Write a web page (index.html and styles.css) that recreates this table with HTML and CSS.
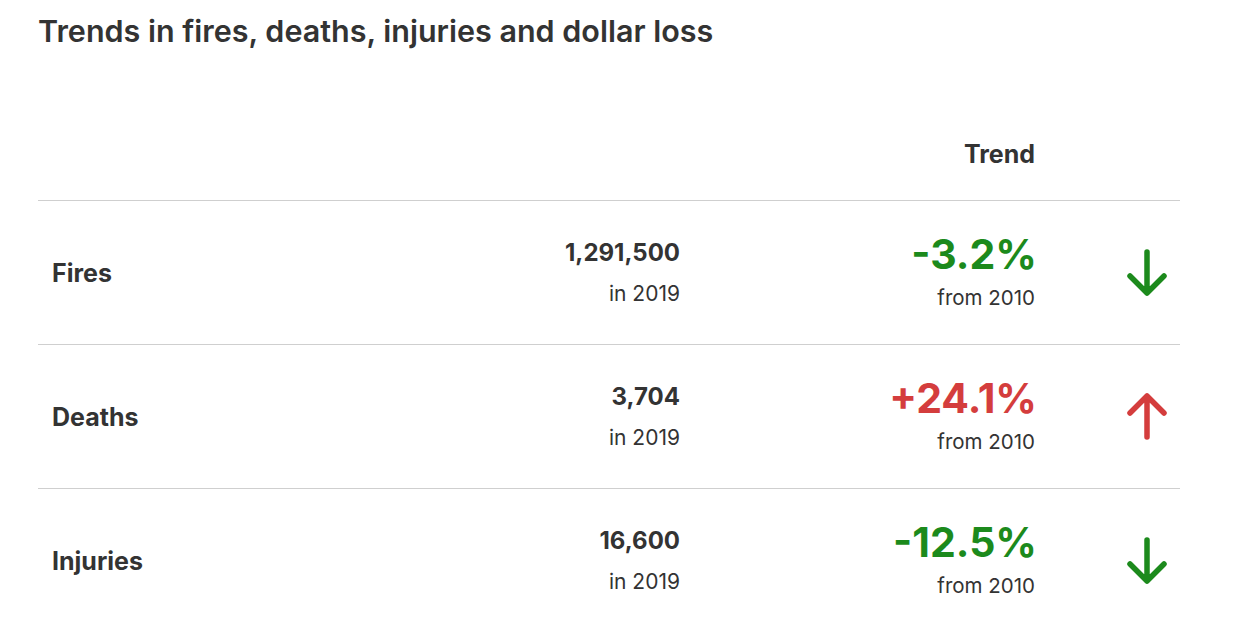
FILE: index.html
```html
<!DOCTYPE html>
<html>
<head>
<meta charset="utf-8">
<link rel="stylesheet" href="styles.css">
</head>
<body>
<div class="page">
  <h1 class="title">Trends in fires, deaths, injuries and dollar loss</h1>
  <div class="table">
    <div class="row head">
      <div class="c-label"></div>
      <div class="c-value"></div>
      <div class="c-trend"><span class="head-text">Trend</span></div>
      <div class="c-arrow"></div>
    </div>
    <div class="row">
      <div class="c-label">Fires</div>
      <div class="c-value"><span class="num">1,291,500</span><span class="sub">in 2019</span></div>
      <div class="c-trend"><span class="pct down">-3.2%</span><span class="sub2">from 2010</span></div>
      <div class="c-arrow"><svg class="arrow down" viewBox="0 0 46 50" width="46" height="50"><path d="M23 4 V45 M6 28 L23 45 L40 28" fill="none" stroke="currentColor" stroke-width="5.5" stroke-linecap="round" stroke-linejoin="round"/></svg></div>
    </div>
    <div class="row">
      <div class="c-label">Deaths</div>
      <div class="c-value"><span class="num">3,704</span><span class="sub">in 2019</span></div>
      <div class="c-trend"><span class="pct up">+24.1%</span><span class="sub2">from 2010</span></div>
      <div class="c-arrow"><svg class="arrow up" viewBox="0 0 46 50" width="46" height="50"><path d="M23 45 V4 M6 21 L23 4 L40 21" fill="none" stroke="currentColor" stroke-width="5.5" stroke-linecap="round" stroke-linejoin="round"/></svg></div>
    </div>
    <div class="row last">
      <div class="c-label">Injuries</div>
      <div class="c-value"><span class="num">16,600</span><span class="sub">in 2019</span></div>
      <div class="c-trend"><span class="pct down">-12.5%</span><span class="sub2">from 2010</span></div>
      <div class="c-arrow"><svg class="arrow down" viewBox="0 0 46 50" width="46" height="50"><path d="M23 4 V45 M6 28 L23 45 L40 28" fill="none" stroke="currentColor" stroke-width="5.5" stroke-linecap="round" stroke-linejoin="round"/></svg></div>
    </div>
  </div>
</div>
</body>
</html>
```

FILE: styles.css
```css
html, body {
  margin: 0;
  padding: 0;
  background: #ffffff;
}
body {
  font-family: Inter, "Noto Sans", "Liberation Sans", sans-serif;
  color: #333333;
}
.page {
  padding-left: 38px;
  width: 1142px;
}
.title {
  margin: 13px 0 0 0;
  font-size: 30.5px;
  line-height: 36px;
  font-weight: 600;
  letter-spacing: 0;
  color: #333333;
}
.table {
  margin-top: 90px;
}
.row {
  display: grid;
  grid-template-columns: 1fr 200px 355px 145px;
  height: 143px;
  border-bottom: 1px solid #cfcfcf;
  align-items: center;
}
.row.head {
  height: 61px;
  align-items: start;
}
.row.last {
  border-bottom: none;
}
.c-label {
  padding-left: 14px;
  font-size: 25px;
  line-height: 30px;
  font-weight: 700;
}
.c-value,
.c-trend {
  display: flex;
  flex-direction: column;
  align-items: flex-end;
}
.head-text {
  font-size: 25px;
  line-height: 30px;
  font-weight: 700;
}
.num {
  font-size: 24px;
  line-height: 41px;
  font-weight: 700;
}
.sub {
  font-size: 21px;
  line-height: 41px;
  font-weight: 400;
}
.pct {
  font-size: 41px;
  line-height: 50px;
  font-weight: 700;
  margin-right: -2px;
}
.sub2 {
  font-size: 20.5px;
  line-height: 38px;
  font-weight: 400;
}
.down { color: #1c8a1c; }
.up { color: #d43d3d; }
.c-arrow {
  display: flex;
  justify-content: flex-end;
  padding-right: 10px;
}
.arrow {
  display: block;
}
```
